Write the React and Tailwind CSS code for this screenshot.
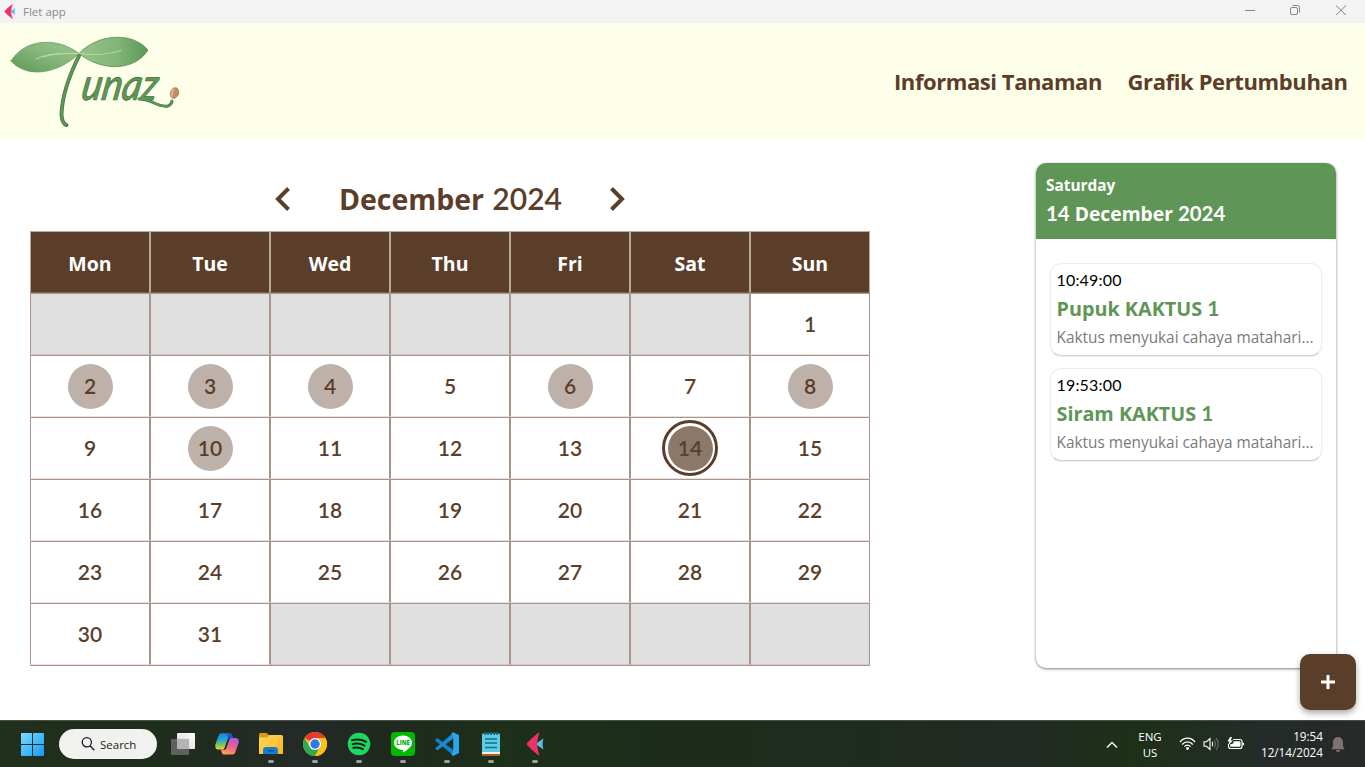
import React from "react";

const days = ["Mon", "Tue", "Wed", "Thu", "Fri", "Sat", "Sun"];
const cells = [
  ...Array(6).fill(null),
  ...Array.from({ length: 31 }, (_, i) => i + 1),
  ...Array(5).fill(null),
];
const marked = [2, 3, 4, 6, 8, 10];

function FletMark({ className }) {
  return (
    <svg viewBox="0 0 18 26" preserveAspectRatio="none" className={className}>
      <path d="M13 1C9 4 4 9 1.500 12a1.800 1.800 0 0 0 0 2C4 17 9 22 13 25c-3-8-3-16 0-24Z" fill="#ee3167" stroke="#ee3167" strokeWidth="1" />
      <path d="M17.500 7 11.500 11.500a2 2 0 0 0 0 3l6 4.500c-1.200-4-1.200-8 0-12Z" fill="#5bbbe8" />
    </svg>
  );
}

function Logo() {
  return (
    <svg viewBox="0 0 190 112" className="mt-px h-[112px] w-[190px]" fill="none" strokeLinecap="round" strokeLinejoin="round">
      <defs>
        <linearGradient id="leafL" x1="0" y1="1" x2="1" y2="0">
          <stop offset="0" stopColor="#5c9857" />
          <stop offset="0.550" stopColor="#86b67b" />
          <stop offset="1" stopColor="#9cc68d" />
        </linearGradient>
        <linearGradient id="leafR" x1="0" y1="0" x2="1" y2="0">
          <stop offset="0" stopColor="#97c389" />
          <stop offset="0.550" stopColor="#82b578" />
          <stop offset="1" stopColor="#5c9857" />
        </linearGradient>
      </defs>
      <path d="M11 37C25 14 58 13 79 29.500C58 50 27 55 11 37Z" fill="url(#leafL)" stroke="#6c9d68" strokeWidth="0.800" />
      <path d="M79 29.500C97 10 132 7 148 26C136 46 103 49 79 29.500Z" fill="url(#leafR)" stroke="#5d8d5b" strokeWidth="0.800" />
      <path d="M36 35C50 28 65 30 79 29.500C95 32 109 30 121 26.500M43 33C58 28 70 30 83 29.500" stroke="#b9dca9" strokeWidth="0.900" />
      <g stroke="#426943" strokeWidth="3.800">
        <path d="M79 32C72 46 62 69 61.500 91C62 97 63 100 66.500 101" />
        <path d="M139 75C151 74 157 84 168 82Q172 80 172 77" strokeWidth="3" />
      </g>
      <text transform="translate(80 75.500) skewX(-10)" textLength="76" lengthAdjust="spacingAndGlyphs" fontFamily="Lato, sans-serif" fontStyle="italic" fontWeight="500" fontSize="44" fill="#5c9853" stroke="#426943" strokeWidth="0.700">
        unaz
      </text>
      <g stroke="#5c9853" strokeWidth="2.600">
        <path d="M79 32C72 46 62 69 61.500 91C62 97 63 100 66 100.500" />
        <path d="M139 75C151 74 157 84 168 82Q172 80 172 77" strokeWidth="2" />
      </g>
      <ellipse cx="174.500" cy="69" rx="4" ry="5.500" fill="#c28d66" stroke="#96694b" strokeWidth="0.600" transform="rotate(20 174.500 69)" />
      <path d="M172 72.500q-.5-5 2-7" stroke="#e5bd9a" strokeWidth="1.500" />
    </svg>
  );
}

function Task({ title, time }) {
  return (
    <article className="flex h-[93px] w-[272px] flex-col rounded-[11px] border border-[#eeeeee] border-b-[#d2d2d2] bg-white pl-[6px] shadow-[0_1px_1px_rgba(0,0,0,0.08)]">
      <div className="mt-1 h-[24px] font-['Lato',sans-serif] text-[16px] leading-[24px] tracking-[0.180px] text-black">{time}</div>
      <div className="h-[33px] whitespace-nowrap font-['Open_Sans',sans-serif] text-[19.800px] font-bold leading-[32px] text-[#5f9556]">
        {title} <span className="font-['Lato',sans-serif] text-[21px]">1</span>
      </div>
      <div className="h-[26px] whitespace-nowrap font-['Open_Sans',sans-serif] text-[15.400px] leading-[26px] tracking-[-0.020px] text-[#7a7a7a]">Kaktus menyukai cahaya matahari...</div>
    </article>
  );
}

function Chrome() {
  return (
    <svg viewBox="0 0 48 48" className="size-6">
      <circle cx="24" cy="24" r="24" fill="#fbc116" />
      <path d="M24 24 3.200 12A24 24 0 0 1 44.800 12H24Z" fill="#e33b2e" />
      <path d="M3.200 12A24 24 0 0 0 24 48L34.400 30 24 24 13.600 30Z" fill="#2da94f" />
      <path d="M24 12h20.800A24 24 0 0 1 24 48l10.400-18Z" fill="#fbc116" />
      <circle cx="24" cy="24" r="12" fill="#fff" />
      <circle cx="24" cy="24" r="9.500" fill="#3478e8" />
    </svg>
  );
}

function Spotify() {
  return (
    <svg viewBox="0 0 24 24" className="size-6">
      <circle cx="12" cy="12" r="11.300" fill="#1ed760" />
      <path d="M5 8.200c4.800-1.300 9.800-.8 14 1.600M5.700 12.200c4-1.100 8.200-.6 11.700 1.500M6.300 15.800c3.400-.8 6.700-.4 9.700 1.300" stroke="#12251a" strokeWidth="2" fill="none" strokeLinecap="round" />
    </svg>
  );
}

function LineApp() {
  return (
    <svg viewBox="0 0 24 24" className="size-6">
      <rect width="24" height="24" rx="4" fill="#00b900" />
      <path d="M12 3.500c5 0 9 3.200 9 7.300 0 4-4.500 7-9 9.900.3-1.400.5-2.400-.3-2.700C6.500 17.500 3 14.700 3 10.800c0-4.100 4-7.300 9-7.300Z" fill="#fff" />
      <text x="5.300" y="13" textLength="13.500" lengthAdjust="spacingAndGlyphs" fontFamily="Open Sans, sans-serif" fontWeight="800" fontSize="6.200" fill="#00b900">LINE</text>
    </svg>
  );
}

function VsCode() {
  return (
    <svg viewBox="0 0 24 24" className="size-6">
      <path d="m.3 7.800 2-1.700 16.200 12V23.500L.3 8.800Z" fill="#1180c8" />
      <path d="M.3 16.200 18.500.5v6L2.500 18.200.3 16.500Z" fill="#1c8ad2" />
      <path d="M18 .2 24 3v18l-6 3-1.700-1.200 1.900-4V5.500l-1.900-4Z" fill="#2aa5ee" />
    </svg>
  );
}

function Notepad() {
  return (
    <svg viewBox="0 0 24 24" className="size-6">
      <rect x="3" y="1.500" width="18" height="20" rx="1" fill="#5fcbe6" />
      <rect x="3" y="20" width="18" height="2.200" fill="#f0f0ee" />
      <rect x="3" y="22" width="18" height="2" fill="#b65a1e" />
      <path d="M6 0v3M9 0v3M12 0v3M15 0v3M18 0v3" stroke="#17627f" strokeWidth="1.500" />
      <path d="M6 7h12M6 11h12M6 15.500h12" stroke="#12708f" strokeWidth="1.500" />
    </svg>
  );
}

function Folder() {
  return (
    <svg viewBox="0 0 24 24" className="size-6">
      <defs>
        <linearGradient id="folder" x1="0" y1="0" x2="1" y2="1">
          <stop stopColor="#ffd75e" />
          <stop offset="1" stopColor="#fcb816" />
        </linearGradient>
      </defs>
      <path d="M0 2.500A1.500 1.500 0 0 1 1.500 1h6L10 3v4H0Z" fill="#dc9a0a" />
      <path d="M0 5.500h8L10.500 3H22.500A1.500 1.500 0 0 1 24 4.500V22H0Z" fill="url(#folder)" />
      <path d="M4 22v-4a3 3 0 0 1 3-3h9a3 3 0 0 1 3 3v4Z" fill="#147fd3" />
      <path d="M9 18.700h5.500" stroke="#0a548f" strokeWidth="1.500" strokeLinecap="round" />
    </svg>
  );
}

function Copilot() {
  return (
    <svg viewBox="0 0 24 24" className="size-6">
      <defs>
        <linearGradient id="copA" x1="0" y1="0" x2="0" y2="1">
          <stop stopColor="#1a80dd" />
          <stop offset="0.400" stopColor="#19a9d8" />
          <stop offset="0.700" stopColor="#77c65c" />
          <stop offset="1" stopColor="#f3d22a" />
        </linearGradient>
        <linearGradient id="copB" x1="0.700" y1="0" x2="0.300" y2="1">
          <stop stopColor="#a75bea" />
          <stop offset="0.450" stopColor="#ea5f92" />
          <stop offset="1" stopColor="#ff9f59" />
        </linearGradient>
      </defs>
      <path d="M6.500 1.200h7.700c2 0 2.700 1.200 3.200 3L18 6h-2.500c-2 0-2.700 1-3.300 3l-2 6c-.7 2-1.500 2.500-3 2.500H3.500C.5 17.500-.3 15 .6 12L3.500 4c.7-2 1.500-2.800 3-2.800Z" fill="url(#copA)" />
      <path d="M17.500 22.500H10c-2 0-3-.8-3.500-2.800L6 17.500h2c2 0 3-.8 3.600-2.800l2-6c.6-2 1.400-2.700 3-2.700h4c2.700 0 3.800 2.300 3 5l-3 8.500c-.6 2-1.500 3-3.100 3Z" fill="url(#copB)" />
      <path d="M13.800 1.200c2 0 3 .8 3.500 2.800L18 6h-2.300c-1.200 0-2 .5-2.500 1.200L12.500 4c-.4-1.600-.2-2.800 1.300-2.800Z" fill="#2050c8" />
      <path d="m12.600 7.500-3.400 9.600c-.3.300-.8.400-1.400.4h3l3.400-9.600q.5-1.500 1.300-1.900-2.100 0-2.900 1.500Z" fill="#243029" />
    </svg>
  );
}

function AppSlot({ children, running }) {
  return (
    <div className="flex h-[46px] w-11 flex-col items-center pt-[11px]">
      {children}
      {running && <span className="mt-1 h-[3px] w-[6px] rounded-full bg-[#9da09d]" />}
    </div>
  );
}

export default function App() {
  return (
    <div className="flex h-[767px] w-[1365px] flex-col overflow-hidden bg-white font-['Open_Sans',sans-serif] text-[#5b3e2a]">
      <div className="flex h-[23px] shrink-0 items-center bg-[#f3f3f3] text-[#8a8a8a]">
        <FletMark className="ml-1 mt-[-1px] h-[15px] w-[11.500px]" />
        <span className="ml-[7.500px] flex-1 text-[11.500px] leading-[23px]">Flet app</span>
        <svg viewBox="0 0 110 23" className="mr-[14px] h-[23px] w-[110px]" fill="none" stroke="#858585">
          <path d="M4 10.500h10" />
          <rect x="49.500" y="7.500" width="7" height="7" rx="1.500" />
          <path d="M51.500 5.500h5a2 2 0 0 1 2 2v5" />
          <path d="m95 5.500 10 9.500M105 5.500 95 15" />
        </svg>
      </div>

      <header className="flex h-[115px] shrink-0 items-start justify-between bg-[#feffe9]">
        <Logo />
        <nav className="flex gap-[26px] pr-[17.500px] pt-[42px] text-[22px] font-bold leading-[32px]">
          <a className="w-[207.500px] whitespace-nowrap tracking-[-0.430px]">Informasi Tanaman</a>
          <a className="w-[220px] whitespace-nowrap tracking-[-0.380px]">Grafik Pertumbuhan</a>
        </nav>
      </header>

      <main className="flex h-[582px] shrink-0 items-start">
        <section className="ml-[30px] mt-[39px] w-[840px]">
          <div className="flex h-[54px] items-center justify-center pb-[10px]">
            <svg viewBox="0 0 16 24" className="h-6 w-4" fill="none" stroke="currentColor" strokeWidth="4">
              <path d="M13.500 1.500 3 12l10.500 10.500" />
            </svg>
            <h1 className="mt-[-2px] flex w-[271px] items-baseline gap-[8.500px] whitespace-nowrap pl-[48px] leading-[44px]">
              <span className="text-[28.500px] font-bold tracking-[-0.050px]">December</span>
              <span className="font-['Lato',sans-serif] text-[30px] font-semibold">2024</span>
            </h1>
            <svg viewBox="0 0 16 24" className="ml-[47px] h-6 w-4" fill="none" stroke="currentColor" strokeWidth="4">
              <path d="M2.500 1.500 13 12 2.500 22.500" />
            </svg>
          </div>
          <div className="grid grid-cols-7 border-b border-[#ab958b]">
            {days.map((day) => (
              <div key={day} className="flex h-[62px] items-center justify-center border border-[#b9a99d] border-b-[#80604f] bg-[#5b3e2a] pt-[3px] text-[19.500px] font-bold text-white">{day}</div>
            ))}
            {cells.map((day, i) => (
              <div key={i} className={`flex h-[62px] items-center justify-center border border-[#ab958b] font-['Lato',sans-serif] text-[21px] font-semibold ${day ? "border-b-[#e9e1dd] bg-white" : "border-b-[#d0c8c4] bg-[#e0e0e0]"}`}>
                {day === 14 ? (
                  <span className="flex size-[56px] items-center justify-center rounded-full border-[3px] border-[#5b3e2a]">
                    <span className="flex size-[45px] items-center justify-center rounded-full bg-[#8c7869] pb-px">14</span>
                  </span>
                ) : (
                  <span className={`flex size-[45px] items-center justify-center rounded-full pb-px ${marked.includes(day) ? "bg-[#bdb1a9]" : ""}`}>{day}</span>
                )}
              </div>
            ))}
          </div>
        </section>

        <aside className="ml-[166px] mt-[25px] h-[505px] w-[300px] rounded-[10px] bg-white shadow-[0_1px_3px_rgba(0,0,0,0.5)]">
          <div className="h-[76px] rounded-t-[10px] bg-[#5f9556] pl-[10px] pt-[10px] text-white">
            <div className="h-[25px] text-[15.400px] font-bold leading-[26px]">Saturday</div>
            <div className="h-[30px] whitespace-nowrap text-[19.300px] font-bold leading-[30px]">
              <span className="font-['Lato',sans-serif] text-[20.400px]">14</span> December <span className="font-['Lato',sans-serif] text-[20.400px]">2024</span>
            </div>
          </div>
          <div className="flex flex-col gap-[12px] pl-[13.500px] pt-6">
            <Task title="Pupuk KAKTUS" time="10:49:00" />
            <Task title="Siram KAKTUS" time="19:53:00" />
          </div>
        </aside>
        <button className="absolute left-[1300px] top-[654px] flex size-14 items-center justify-center rounded-[10px] bg-[#5b3e2a] shadow-[0_3px_6px_rgba(0,0,0,0.35)]">
          <svg viewBox="0 0 14 14" className="size-[14px]" stroke="white" strokeWidth="3">
            <path d="M7 0v14M0 7h14" />
          </svg>
        </button>
      </main>

      <footer className="flex h-[47px] shrink-0 items-start border-t border-[#465044] bg-[linear-gradient(90deg,#20301c_0%,#1f2e1b_10%,#242a28_22%,#20291f_28%,#1d3019_37%,#1d2c1c_50%,#222a23_75%,#1e3018_83%,#242b28_92%,#262a29_100%)] text-white">
        <svg viewBox="0 0 24 24" className="ml-[21px] mt-3 size-[23px]">
          <defs>
            <linearGradient id="win" x1="0" y1="0" x2="1" y2="1">
              <stop stopColor="#7cdcff" />
              <stop offset="1" stopColor="#119af5" />
            </linearGradient>
          </defs>
          <path d="M0 1q0-1 1-1h10.500v11.500H0ZM12.500 0H23q1 0 1 1v10.500H12.500ZM0 12.500h11.500V24H1q-1 0-1-1ZM12.500 12.500H24V23q0 1-1 1H12.500Z" fill="url(#win)" />
        </svg>
        <div className="ml-[15px] mt-2 flex h-[30px] w-[98px] items-center rounded-full bg-[#f1f2f0] pl-[22px] text-[#1c1c1c]">
          <svg viewBox="0 0 14 14" className="size-[14px]" fill="none" stroke="currentColor" strokeWidth="1.300">
            <circle cx="5.800" cy="5.300" r="4.600" />
            <path d="m9 8.700 4.300 4.500" />
          </svg>
          <span className="ml-[5px] mt-[2px] text-[11.500px]">Search</span>
        </div>
        <div className="ml-1 flex">
          <AppSlot>
            <svg viewBox="0 0 24 24" className="size-6">
              <defs>
                <linearGradient id="pane" x1="0" y1="1" x2="1" y2="0">
                  <stop stopColor="#d5d5d5" />
                  <stop offset="1" stopColor="#ffffff" />
                </linearGradient>
              </defs>
              <rect x="6" y="1" width="18" height="16" rx="1" fill="url(#pane)" />
              <rect x="0" y="7" width="18" height="16" rx="1" fill="#5f605f" />
              <path d="M6 7h12v10H7q-1 0-1-1Z" fill="#b4b4b4" />
            </svg>
          </AppSlot>
          <AppSlot><Copilot /></AppSlot>
          <AppSlot running><Folder /></AppSlot>
          <AppSlot running><Chrome /></AppSlot>
          <AppSlot running><Spotify /></AppSlot>
          <AppSlot running><LineApp /></AppSlot>
          <AppSlot running><VsCode /></AppSlot>
          <AppSlot running><Notepad /></AppSlot>
          <AppSlot running><FletMark className="h-6 w-[18px]" /></AppSlot>
        </div>
        <svg viewBox="0 0 12 8" className="ml-auto mt-5 h-2 w-3" fill="none" stroke="white" strokeWidth="1.400"><path d="m1 6.500 5-5 5 5" /></svg>
        <div className="ml-[18px] mt-2 w-[28px] text-center text-[11.500px] leading-4"><div>ENG</div><div>US</div></div>
        <svg viewBox="0 0 17 14" className="ml-[15px] mt-4 h-[14px] w-[17px]" fill="none" stroke="white" strokeWidth="1.300">
          <path d="M1 5C5-.2 12-.2 16 5M3.200 7.500c3-3.600 7.600-3.600 10.600 0M5.500 9.700c1.600-2.200 4.400-2.200 6 0" />
          <circle cx="8.500" cy="11.500" r="1.400" fill="white" stroke="none" />
        </svg>
        <svg viewBox="0 0 17 14" className="ml-[7px] mt-4 h-[14px] w-[17px]" fill="none" stroke="white" strokeWidth="1.100">
          <path d="M1 4.700h2.500L7 1.500v11L3.500 9.300H1ZM9 4.800q1.500 2.200 0 4.400" />
          <path d="M11 3q2.800 4 0 8M13 1.200q4.500 5.800 0 11.600" stroke="#687068" />
        </svg>
        <svg viewBox="0 0 17 14" className="ml-[7px] mt-4 h-[14px] w-[17px]">
          <path d="M6 2.500h7q2 0 2 2v5q0 2-2 2H3.500q-2 0-2-2V7" fill="none" stroke="white" strokeWidth="1.100" />
          <path d="M6.500 4.200h6q1 0 1 1v3.600q0 1-1 1H4q-1 0-1-1V7.500l3.500-1.300ZM15.500 5.200 17 6v2l-1.500.8ZM3 0 .5 4.500h2L1 8.500l5-5H3.800L5 0Z" fill="white" />
        </svg>
        <div className="ml-[9px] mt-[7px] w-[70px] whitespace-nowrap text-right text-[11.700px] leading-4"><div>19:54</div><div>12/14/2024</div></div>
        <svg viewBox="0 0 14 16" className="ml-2 mr-5 mt-4 h-4 w-[14px]" fill="#7b7271">
          <path d="M7 0a5 5 0 0 1 5 5v4.200l1.700 3H.3l1.700-3V5a5 5 0 0 1 5-5ZM4.800 13h4.400A2.200 2.200 0 0 1 7 15a2.200 2.200 0 0 1-2.200-2Z" />
        </svg>
      </footer>
    </div>
  );
}
